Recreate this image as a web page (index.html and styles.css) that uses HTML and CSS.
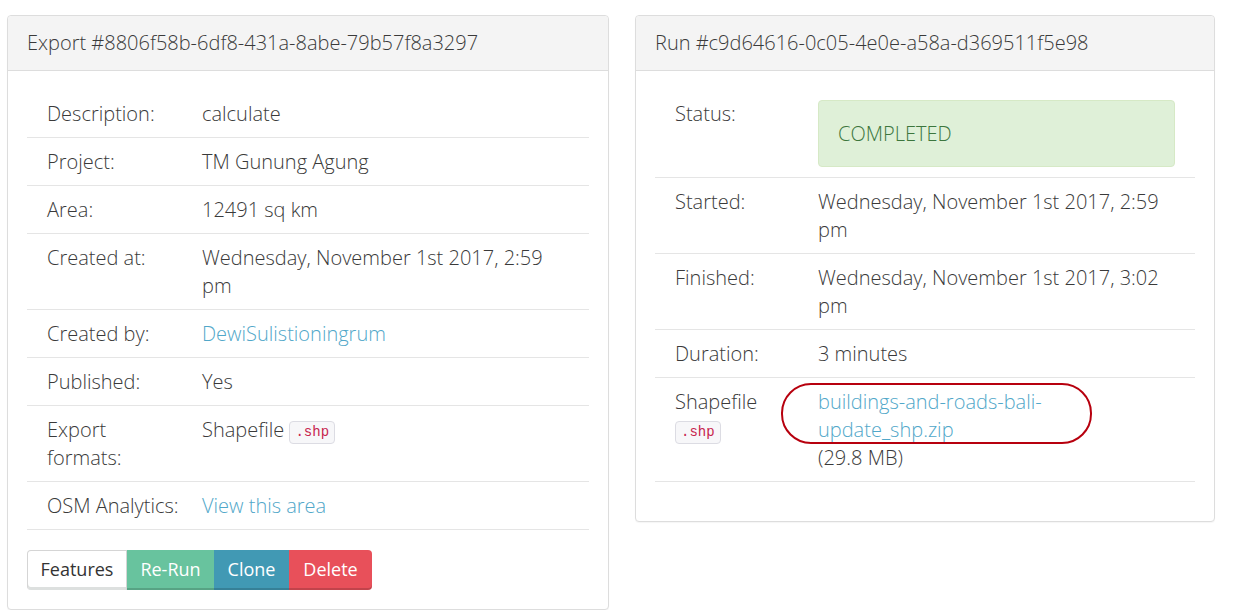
FILE: index.html
```html
<!DOCTYPE html>
<html>
<head>
<meta charset="utf-8">
<link rel="stylesheet" href="styles.css">
</head>
<body>
<div class="page">
  <section class="panel panel-export">
    <header class="panel-heading">Export #8806f58b-6df8-431a-8abe-79b57f8a3297</header>
    <div class="panel-body">
      <table class="details details-export">
        <tr><td class="lbl">Description:</td><td class="val">calculate</td></tr>
        <tr><td class="lbl">Project:</td><td class="val">TM Gunung Agung</td></tr>
        <tr><td class="lbl">Area:</td><td class="val">12491 sq km</td></tr>
        <tr><td class="lbl">Created at:</td><td class="val">Wednesday, November 1st 2017, 2:59 pm</td></tr>
        <tr><td class="lbl">Created by:</td><td class="val"><a class="link" href="#">DewiSulistioningrum</a></td></tr>
        <tr><td class="lbl">Published:</td><td class="val">Yes</td></tr>
        <tr><td class="lbl">Export<br>formats:</td><td class="val">Shapefile <code class="code">.shp</code></td></tr>
        <tr><td class="lbl nowrap">OSM Analytics:</td><td class="val"><a class="link" href="#">View this area</a></td></tr>
      </table>
      <div class="btn-group">
        <button class="btn btn-default">Features</button>
        <button class="btn btn-success">Re-Run</button>
        <button class="btn btn-info">Clone</button>
        <button class="btn btn-danger">Delete</button>
      </div>
    </div>
  </section>
  <section class="panel panel-run">
    <header class="panel-heading">Run #c9d64616-0c05-4e0e-a58a-d369511f5e98</header>
    <div class="panel-body">
      <table class="details details-run">
        <tr><td class="lbl">Status:</td><td class="val"><div class="alert">COMPLETED</div></td></tr>
        <tr><td class="lbl">Started:</td><td class="val">Wednesday, November 1st 2017, 2:59 pm</td></tr>
        <tr><td class="lbl">Finished:</td><td class="val">Wednesday, November 1st 2017, 3:02 pm</td></tr>
        <tr><td class="lbl">Duration:</td><td class="val">3 minutes</td></tr>
        <tr><td class="lbl">Shapefile<br><code class="code">.shp</code></td><td class="val"><div class="file"><a class="link" href="#">buildings-and-roads-bali-update_shp.zip</a><span class="mark"></span><br>(29.8 MB)</div></td></tr>
      </table>
    </div>
  </section>
</div>
</body>
</html>
```
FILE: styles.css
```css
html, body {
  margin: 0;
  padding: 0;
  background: #fff;
}
body {
  font-family: "Open Sans", "Liberation Sans", sans-serif;
  font-weight: 300;
  font-size: 20px;
  line-height: 28px;
  color: #3a3a3a;
}
.page {
  display: flex;
  align-items: flex-start;
  padding: 15px 0 0 7px;
}
.panel {
  border: 1px solid #dddddd;
  border-radius: 4px;
  background: #fff;
  box-shadow: 0 1px 1px rgba(0,0,0,0.04);
}
.panel-export { width: 600px; }
.panel-run { width: 578px; margin-left: 26px; }
.panel-heading {
  background: #f4f4f4;
  border-bottom: 1px solid #dddddd;
  border-radius: 4px 4px 0 0;
  padding: 13px 19px;
  line-height: 28px;
  color: #3a3a3a;
}
.panel-body {
  padding: 19px 19px 19px 19px;
}
.details {
  width: 100%;
  border-collapse: collapse;
  margin-bottom: 20px;
}
.details td {
  vertical-align: top;
  padding: 10px 20px 9px 20px;
  border-bottom: 1px solid #e5e5e5;
}
.details td.lbl { padding-right: 0; }
.details-export td.lbl { width: 135px; }
.details-run td.lbl { width: 123px; }
.nowrap { white-space: nowrap; }
.link {
  color: #51a7c9;
  text-decoration: none;
}
.code {
  font-family: "Liberation Mono", "DejaVu Sans Mono", monospace;
  font-size: 14px;
  line-height: 17px;
  font-weight: 400;
  color: #c7254e;
  background: #f7f7f9;
  border: 1px solid #dcdce3;
  border-radius: 4px;
  padding: 2px 5px;
  display: inline-block;
  vertical-align: 1px;
}
.btn-group {
  display: flex;
}
.btn {
  font-family: inherit;
  font-weight: 400;
  font-size: 18px;
  line-height: 28px;
  height: 40px;
  padding: 5px 0 7px 0;
  border: 0;
  color: #fff;
  margin: 0;
  cursor: pointer;
  box-shadow: inset 0 -2px 0 rgba(0,0,0,0.16);
}
.btn-default {
  background: #fff;
  color: #333;
  border: 1px solid #d5d5d5;
  border-bottom: 0;
  border-radius: 4px 0 0 4px;
  padding: 4px 0 7px 0;
  box-shadow: inset 0 -3px 0 #dde0df;
  width: 100px;
}
.btn-success { background: #68c39e; width: 87px; }
.btn-info { background: #4199b4; width: 75px; }
.btn-danger { background: #e8505a; width: 83px; border-radius: 0 4px 4px 0; }
.alert {
  background: #dff0d8;
  border: 1px solid #d6e9c6;
  color: #3c763d;
  border-radius: 4px;
  padding: 19px 19px 18px 19px;
  margin-bottom: 1px;
}
.file {
  position: relative;
}
.mark {
  position: absolute;
  left: -37px;
  top: -5px;
  width: 311px;
  height: 61px;
  box-sizing: border-box;
  border: 2px solid #b7000e;
  border-radius: 30px;
  pointer-events: none;
}
```
